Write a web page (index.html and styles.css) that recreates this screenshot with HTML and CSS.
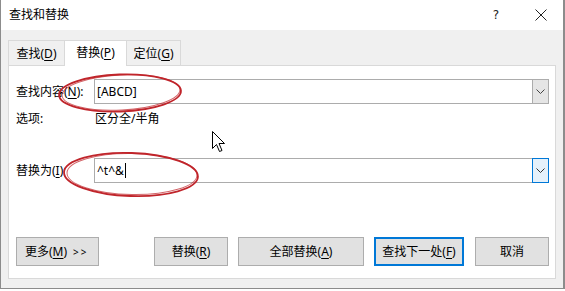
FILE: index.html
```html
<!DOCTYPE html>
<html lang="zh">
<head>
<meta charset="utf-8">
<link rel="stylesheet" href="styles.css">
</head>
<body>
<div class="window">
  <div class="titlebar">
    <span class="title">查找和替换</span>
    <span class="help">?</span>
    <svg class="close" width="12" height="12" viewBox="0 0 12 12"><path d="M0.5 0.5 L11.5 11.5 M11.5 0.5 L0.5 11.5" stroke="#222" stroke-width="1" fill="none"/></svg>
  </div>
  <div class="content">
    <div class="tabs">
      <div class="tab">查找(<u>D</u>)</div>
      <div class="tab active">替换(<u>P</u>)</div>
      <div class="tab">定位(<u>G</u>)</div>
    </div>
    <div class="panel">
      <div class="row field-row">
        <label class="label">查找内容(<u>N</u>):</label>
        <div class="combo">
          <span class="value">[ABCD]</span>
          <span class="drop"><svg width="9" height="5" viewBox="0 0 9 5"><path d="M0.5 0.5 L4.5 4.5 L8.5 0.5" stroke="#444" stroke-width="1" fill="none"/></svg></span>
        </div>
      </div>
      <div class="row options-row">
        <span class="label">选项:</span>
        <span class="opt">区分全/半角</span>
      </div>
      <div class="row field-row replace-row">
        <label class="label">替换为(<u>I</u>)</label>
        <div class="combo">
          <span class="value">^t^&amp;<span class="caret"></span></span>
          <span class="drop focus"><svg width="9" height="5" viewBox="0 0 9 5"><path d="M0.5 0.5 L4.5 4.5 L8.5 0.5" stroke="#333" stroke-width="1" fill="none"/></svg></span>
        </div>
      </div>
      <div class="buttons">
        <button class="btn more">更多(<u>M</u>) <span class="arrows">&gt;&gt;</span></button>
        <div class="spacer"></div>
        <button class="btn w74">替换(<u>R</u>)</button>
        <button class="btn w126">全部替换(<u>A</u>)</button>
        <button class="btn w90 default">查找下一处(<u>F</u>)</button>
        <button class="btn w74 cancel">取消</button>
      </div>
    </div>
  </div>
</div>
<svg class="marks" width="565" height="291" viewBox="0 0 565 291">
  <g fill="none" stroke="#c0252b" stroke-width="1.8">
    <ellipse cx="120" cy="93" rx="61" ry="18.5" transform="rotate(-2 120 93)"/>
    <ellipse cx="121" cy="92.5" rx="59" ry="17.5" transform="rotate(-3 121 92)" stroke-width="1" opacity="0.7"/>
    <ellipse cx="131" cy="174.5" rx="67" ry="21.5" transform="rotate(2 131 174)"/>
    <ellipse cx="132" cy="174" rx="65" ry="20.5" transform="rotate(1 131 174)" stroke-width="1" opacity="0.7"/>
  </g>
  <path class="cursor" d="M212.5 131.5 L212.5 148.5 L216.5 144.5 L219.5 151.5 L222 150.5 L219 143.5 L224.5 143.5 Z" fill="#fff" stroke="#000" stroke-width="1" stroke-linejoin="miter"/>
</svg>
</body>
</html>
```

FILE: styles.css
```css
* { box-sizing: border-box; }
html, body { margin: 0; padding: 0; }
body {
  width: 565px;
  height: 291px;
  background: #ffffff;
  position: relative;
  overflow: hidden;
  font-family: "Noto Sans", "Noto Sans CJK SC", sans-serif;
  font-size: 12px;
  color: #000;
}
u { text-decoration: underline; text-underline-offset: 2px; }
.window {
  width: 565px;
  height: 289px;
  border: 1px solid #8c8c8c;
  border-top: none;
  border-right-width: 2px;
  display: flex;
  flex-direction: column;
}
.titlebar {
  height: 30px;
  background: #fff;
  display: flex;
  align-items: center;
  padding-left: 8px;
  flex: none;
}
.title { font-size: 12px; line-height: 16px; }
.help { margin-left: auto; margin-right: 36px; font-family: "DejaVu Sans", sans-serif; font-size: 12px; color: #222; }
.close { margin-right: 16px; }
.content {
  flex: 1;
  background: #f0f0f0;
  padding: 9px 7px 9px 7px;
  display: flex;
  flex-direction: column;
}
.tabs {
  display: flex;
  align-items: flex-end;
  height: 27px;
  flex: none;
  position: relative;
  z-index: 1;
}
.tab {
  height: 25px;
  border: 1px solid #d9d9d9;
  border-bottom: none;
  background: #f0f0f0;
  display: flex;
  align-items: center;
  justify-content: center;
  line-height: 16px;
  margin-bottom: 1px;
}
.tab:first-child { width: 57px; padding-top: 1px; }
.tab.active {
  width: 61px;
  height: 27px;
  margin-bottom: -1px;
  background: #fff;
  border-left: none;
  border-right: none;
  padding-bottom: 2px;
}
.tab:last-child { width: 55px; padding-top: 1px; }
.panel {
  width: 548px;
  height: 214px;
  margin-top: -1px;
  background: #fff;
  border: 1px solid #d9d9d9;
  display: flex;
  flex-direction: column;
  padding: 13px 6px 0 7px;
}
.row { display: flex; align-items: center; }
.label { width: 78px; flex: none; line-height: 16px; }
.field-row { height: 25px; }
.combo {
  flex: 1;
  height: 25px;
  border: 1px solid #acacac;
  display: flex;
  align-items: stretch;
  background: #fff;
}
.value { flex: 1; padding-left: 2px; display: flex; align-items: center; line-height: 16px; }
.caret { display: inline-block; width: 1px; height: 15px; background: #000; margin-left: 1px; }
.drop {
  width: 17px;
  background: #e5e5e5;
  border-left: 1px solid #acacac;
  display: flex;
  align-items: center;
  justify-content: center;
  margin: -1px -1px -1px 0;
  border-top: 1px solid #acacac;
  border-bottom: 1px solid #acacac;
  border-right: 1px solid #acacac;
}
.drop.focus {
  background: #e5f1fb;
  border-color: #0078d7;
}
.options-row { margin-top: 7px; height: 16px; }
.opt { margin-left: 1px; line-height: 16px; }
.replace-row { margin-top: 31px; }
.buttons {
  margin-top: 54px;
  display: flex;
  height: 29px;
}
.spacer { flex: 1; }
.btn {
  height: 29px;
  background: #e1e1e1;
  border: 1px solid #adadad;
  font: inherit;
  color: #000;
  padding: 0;
  margin: 0 0 0 10px;
  display: flex;
  align-items: center;
  justify-content: center;
  line-height: 16px;
}
.btn.more { width: 83px; margin-left: 0; justify-content: flex-start; padding-left: 8px; }
.arrows { margin-left: 6px; font-size: 10px; letter-spacing: 2px; }
.w74 { width: 74px; }
.w126 { width: 126px; }
.w90 { width: 90px; }
.btn.default { border: 2px solid #0078d7; }
.btn.cancel { margin-left: 11px; }
.marks { position: absolute; left: 0; top: 0; pointer-events: none; }
```
